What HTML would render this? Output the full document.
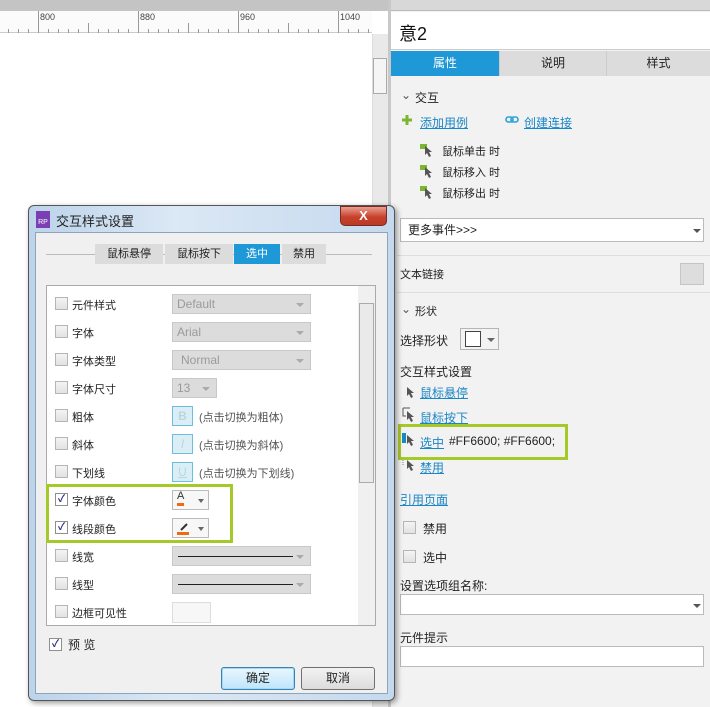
<!DOCTYPE html><html><head><meta charset="utf-8"><style>
*{margin:0;padding:0;box-sizing:border-box}
body{width:710px;height:707px;position:relative;overflow:hidden;background:#fff;font-family:"Liberation Sans","Noto Sans CJK SC",sans-serif;font-size:12px;color:#222}
.a{position:absolute;white-space:nowrap}
.lk{color:#1b86c6;text-decoration:underline}
.cb{position:absolute;width:13px;height:13px;border:1px solid #b5b5b5;background:linear-gradient(#f4f4f4,#e2e2e2)}
.ck{position:absolute;width:13px;height:13px;border:1px solid #8e8f8f;background:#fff;color:#2a2a8a;font-size:10px;line-height:11px;text-align:center;font-weight:bold}
.dd{position:absolute;height:20px;background:#dcdcdc;border:1px solid #c8c8c8;color:#9a9a9a;padding-left:4px;line-height:18px}
.dd:after{content:"";position:absolute;right:6px;top:8px;border:4px solid transparent;border-top:4px solid #aaa}
.lbl{position:absolute;left:72px}
</style></head><body>
<div class="a" style="left:0;top:0;width:390px;height:11px;background:#c4c4c4"></div>
<div class="a" style="left:0;top:11px;width:372px;height:22px;background:#fbfbfb;border-bottom:1px solid #ccc"></div>
<svg class="a" style="left:0;top:11px" width="372" height="22">
<g stroke="#999" stroke-width="1">
<path d="M38.5 0v22M88.5 12v10M138.5 0v22M188.5 12v10M238.5 0v22M288.5 12v10M338.5 0v22"/>
<path d="M8.5 18v4M18.5 18v4M28.5 18v4M48.5 18v4M58.5 18v4M68.5 18v4M78.5 18v4M98.5 18v4M108.5 18v4M118.5 18v4M128.5 18v4M148.5 18v4M158.5 18v4M168.5 18v4M178.5 18v4M198.5 18v4M208.5 18v4M218.5 18v4M228.5 18v4M248.5 18v4M258.5 18v4M268.5 18v4M278.5 18v4M298.5 18v4M308.5 18v4M318.5 18v4M328.5 18v4M348.5 18v4M358.5 18v4M368.5 18v4"/></g>
<g font-size="9" fill="#444" font-family="Liberation Sans"><text x="40" y="9">800</text><text x="140" y="9">880</text><text x="240" y="9">960</text><text x="340" y="9">1040</text></g></svg>
<div class="a" style="left:372px;top:34px;width:16px;height:673px;background:#e9e9e9;border-left:1px solid #ddd"></div>
<div class="a" style="left:373px;top:58px;width:14px;height:36px;background:#f5f5f5;border:1px solid #aaa"></div>
<div class="a" style="left:388px;top:0;width:3px;height:707px;background:#c8c8c8"></div>
<div class="a" style="left:391px;top:0;width:319px;height:707px;background:#f2f2f2"></div>
<div class="a" style="left:391px;top:0;width:319px;height:11px;background:#d8d8d8;border-bottom:1px solid #bbb"></div>
<div class="a" style="left:391px;top:12px;width:319px;height:38px;background:#fff;border-bottom:1px solid #ccc"></div>
<div class="a" style="left:399px;top:20px;font-size:18px;color:#111">意2</div>
<div class="a" style="left:391px;top:51px;width:108px;height:25px;background:#1e98d6;color:#fff;text-align:center;line-height:25px">属性</div>
<div class="a" style="left:499px;top:51px;width:107px;height:25px;background:#dcdcdc;text-align:center;line-height:25px;border-left:1px solid #ccc">说明</div>
<div class="a" style="left:606px;top:51px;width:104px;height:25px;background:#dcdcdc;text-align:center;line-height:25px;border-left:1px solid #ccc">样式</div>
<div class="a" style="left:401px;top:88px;color:#555">⌄</div>
<div class="a" style="left:415px;top:89px">交互</div>
<svg class="a" style="left:401px;top:114px" width="12" height="12"><path d="M6 1v10M1 6h10" stroke="#7cb631" stroke-width="3"/></svg>
<div class="a lk" style="left:420px;top:114px">添加用例</div>
<svg class="a" style="left:505px;top:116px" width="14" height="8"><rect x="1" y="1" width="7" height="5" rx="2.5" fill="none" stroke="#2aa0d8" stroke-width="1.6"/><rect x="6" y="1" width="7" height="5" rx="2.5" fill="none" stroke="#2aa0d8" stroke-width="1.6"/></svg>
<div class="a lk" style="left:524px;top:114px">创建连接</div>
<svg class="a" style="left:420px;top:144px" width="14" height="60"><g fill="#7cb631"><rect x="0" y="0" width="7" height="5"/><rect x="0" y="21" width="7" height="5"/><rect x="0" y="42" width="7" height="5"/></g><g fill="#555"><path d="M5 2l7 6-3 0 2 4-2 1-2-4-2 2z"/><path d="M5 23l7 6-3 0 2 4-2 1-2-4-2 2z"/><path d="M5 44l7 6-3 0 2 4-2 1-2-4-2 2z"/></g></svg>
<div class="a" style="left:442px;top:143px;font-size:11px">鼠标单击 时</div>
<div class="a" style="left:442px;top:164px;font-size:11px">鼠标移入 时</div>
<div class="a" style="left:442px;top:185px;font-size:11px">鼠标移出 时</div>
<div class="a" style="left:400px;top:218px;width:304px;height:24px;background:#fff;border:1px solid #bbb;padding-left:7px;line-height:22px">更多事件&gt;&gt;&gt;</div>
<div class="a" style="left:693px;top:229px;border:4px solid transparent;border-top:4px solid #555"></div>
<div class="a" style="left:397px;top:255px;width:313px;border-top:1px solid #ddd"></div>
<div class="a" style="left:400px;top:266px;font-size:11px">文本链接</div>
<div class="a" style="left:680px;top:263px;width:24px;height:22px;background:#ddd;border:1px solid #c5c5c5"></div>
<div class="a" style="left:397px;top:292px;width:313px;border-top:1px solid #ddd"></div>
<div class="a" style="left:401px;top:302px;color:#555">⌄</div>
<div class="a" style="left:415px;top:303px;font-size:11px">形状</div>
<div class="a" style="left:400px;top:332px">选择形状</div>
<div class="a" style="left:460px;top:328px;width:39px;height:22px;border:1px solid #b5b5b5;background:#f3f3f3"></div>
<div class="a" style="left:465px;top:331px;width:16px;height:16px;border:1px solid #444;background:#fff"></div>
<div class="a" style="left:487px;top:338px;border:4px solid transparent;border-top:4px solid #666"></div>
<div class="a" style="left:400px;top:363px">交互样式设置</div>
<svg class="a" style="left:402px;top:385px" width="14" height="90"><path d="M5 2l7 6-3 0 2 4-2 1-2-4-2 2z" fill="#555"/><path d="M1 23v8h3M1 23h7" stroke="#555" fill="none"/><path d="M5 26l7 6-3 0 2 4-2 1-2-4-2 2z" fill="#555"/><rect x="0" y="48" width="4" height="10" fill="#1b86c6"/><path d="M5 50l7 6-3 0 2 4-2 1-2-4-2 2z" fill="#555"/><path d="M1 73v8M1 73h6" stroke="#888" stroke-dasharray="1 1" fill="none"/><path d="M5 75l7 6-3 0 2 4-2 1-2-4-2 2z" fill="#555"/></svg>
<div class="a lk" style="left:420px;top:384px">鼠标悬停</div>
<div class="a lk" style="left:420px;top:409px">鼠标按下</div>
<div class="a lk" style="left:420px;top:434px">选中</div>
<div class="a" style="left:449px;top:434px">#FF6600; #FF6600;</div>
<div class="a" style="left:398px;top:424px;width:170px;height:36px;border:3px solid #a6c92a"></div>
<div class="a lk" style="left:420px;top:459px">禁用</div>
<div class="a lk" style="left:400px;top:491px">引用页面</div>
<div class="cb" style="left:403px;top:521px"></div><div class="a" style="left:423px;top:520px">禁用</div>
<div class="cb" style="left:403px;top:550px"></div><div class="a" style="left:423px;top:549px">选中</div>
<div class="a" style="left:400px;top:577px">设置选项组名称:</div>
<div class="a" style="left:400px;top:594px;width:304px;height:21px;background:#fff;border:1px solid #bbb"></div>
<div class="a" style="left:693px;top:604px;border:4px solid transparent;border-top:4px solid #555"></div>
<div class="a" style="left:400px;top:629px">元件提示</div>
<div class="a" style="left:400px;top:646px;width:304px;height:21px;background:#fff;border:1px solid #bbb"></div>
<div class="a" style="left:28px;top:205px;width:367px;height:496px;border:1px solid #555;border-radius:6px;background:linear-gradient(90deg,#bcd3ea,#dbe8f5 40%,#c5d9ee);box-shadow:2px 2px 6px rgba(0,0,0,.4)"></div>
<div class="a" style="left:36px;top:211px;width:14px;height:17px;background:#7b3fb5;color:#fff;font-size:7px;line-height:24px;text-align:center">RP</div>
<div class="a" style="left:56px;top:211px;font-size:13px">交互样式设置</div>
<div class="a" style="left:340px;top:206px;width:47px;height:20px;border:1px solid #7a2a20;border-radius:0 0 5px 5px;background:linear-gradient(#e8a090,#c8412c 55%,#b93a25);color:#fff;text-align:center;font-weight:bold;font-size:13px;line-height:18px">X</div>
<div class="a" style="left:35px;top:232px;width:353px;height:462px;background:#f0f0f0;border:1px solid #8ea4bb"></div>
<div class="a" style="left:46px;top:254px;width:326px;border-top:1px solid #bbb"></div>
<div class="a" style="left:95px;top:244px;width:68px;height:20px;background:#dcdcdc;text-align:center;line-height:20px;font-size:11px">鼠标悬停</div>
<div class="a" style="left:165px;top:244px;width:68px;height:20px;background:#dcdcdc;text-align:center;line-height:20px;font-size:11px">鼠标按下</div>
<div class="a" style="left:234px;top:244px;width:46px;height:20px;background:#1e98d6;color:#fff;text-align:center;line-height:20px;font-size:11px">选中</div>
<div class="a" style="left:282px;top:244px;width:44px;height:20px;background:#dcdcdc;text-align:center;line-height:20px;font-size:11px">禁用</div>
<div class="a" style="left:46px;top:285px;width:330px;height:341px;background:#fff;border:1px solid #aaa"></div>
<div class="a" style="left:358px;top:286px;width:17px;height:339px;background:#f0f0f0"></div>
<div class="a" style="left:359px;top:303px;width:15px;height:180px;background:#eaeaea;border:1px solid #aaa"></div>
<div class="cb" style="left:55px;top:297px"></div><div class="a lbl" style="top:297px;font-size:11px">元件样式</div><div class="dd" style="left:172px;top:294px;width:139px">Default</div>
<div class="cb" style="left:55px;top:325px"></div><div class="a lbl" style="top:325px;font-size:11px">字体</div><div class="dd" style="left:172px;top:322px;width:139px">Arial</div>
<div class="cb" style="left:55px;top:353px"></div><div class="a lbl" style="top:353px;font-size:11px">字体类型</div><div class="dd" style="left:172px;top:350px;width:139px;padding-left:8px">Normal</div>
<div class="cb" style="left:55px;top:381px"></div><div class="a lbl" style="top:381px;font-size:11px">字体尺寸</div><div class="dd" style="left:172px;top:378px;width:45px">13</div>
<div class="cb" style="left:55px;top:409px"></div><div class="a lbl" style="top:409px;font-size:11px">粗体</div>
<div class="cb" style="left:55px;top:437px"></div><div class="a lbl" style="top:437px;font-size:11px">斜体</div>
<div class="cb" style="left:55px;top:465px"></div><div class="a lbl" style="top:465px;font-size:11px">下划线</div>
<div class="a" style="left:172px;top:406px;width:21px;height:20px;background:#dbeef6;border:1px solid #6cbfdd;color:#b6d6e6;text-align:center;font-weight:bold;line-height:18px">B</div><div class="a" style="left:199px;top:409px;font-size:11px;color:#555">(点击切换为粗体)</div>
<div class="a" style="left:172px;top:434px;width:21px;height:20px;background:#dbeef6;border:1px solid #6cbfdd;color:#b6d6e6;text-align:center;font-style:italic;line-height:18px">I</div><div class="a" style="left:199px;top:437px;font-size:11px;color:#555">(点击切换为斜体)</div>
<div class="a" style="left:172px;top:462px;width:21px;height:20px;background:#dbeef6;border:1px solid #6cbfdd;color:#b6d6e6;text-align:center;text-decoration:underline;line-height:18px">U</div><div class="a" style="left:199px;top:465px;font-size:11px;color:#555">(点击切换为下划线)</div>
<div class="ck" style="left:55px;top:493px">✓</div><div class="a lbl" style="top:493px;font-size:11px">字体颜色</div>
<div class="a" style="left:172px;top:490px;width:37px;height:20px;border:1px solid #bbb;background:#f7f7f7"></div>
<div class="a" style="left:177px;top:490px;font-size:11px;color:#333;border-bottom:3px solid #f06a10;line-height:13px">A</div>
<div class="a" style="left:198px;top:499px;border:3px solid transparent;border-top:4px solid #666"></div>
<div class="ck" style="left:55px;top:521px">✓</div><div class="a lbl" style="top:521px;font-size:11px">线段颜色</div>
<div class="a" style="left:172px;top:518px;width:37px;height:20px;border:1px solid #bbb;background:#f7f7f7"></div>
<svg class="a" style="left:176px;top:520px" width="16" height="16"><path d="M5 10l6-6" stroke="#333" stroke-width="2"/><rect x="1" y="12" width="12" height="3" fill="#f06a10"/></svg>
<div class="a" style="left:198px;top:527px;border:3px solid transparent;border-top:4px solid #666"></div>
<div class="a" style="left:46px;top:484px;width:187px;height:59px;border:3px solid #a6c92a"></div>
<div class="cb" style="left:55px;top:549px"></div><div class="a lbl" style="top:549px;font-size:11px">线宽</div><div class="dd" style="left:172px;top:546px;width:139px"></div>
<div class="a" style="left:178px;top:556px;width:115px;border-top:1px solid #222"></div>
<div class="cb" style="left:55px;top:577px"></div><div class="a lbl" style="top:577px;font-size:11px">线型</div><div class="dd" style="left:172px;top:574px;width:139px"></div>
<div class="a" style="left:178px;top:584px;width:115px;border-top:1px solid #222"></div>
<div class="cb" style="left:55px;top:605px"></div><div class="a lbl" style="top:605px;font-size:11px">边框可见性</div>
<div class="a" style="left:172px;top:602px;width:39px;height:21px;border:1px solid #ddd;background:#f7f7f7"></div>
<div class="ck" style="left:49px;top:638px">✓</div><div class="a" style="left:68px;top:636px">预 览</div>
<div class="a" style="left:221px;top:667px;width:74px;height:23px;border:1px solid #3c7fb1;border-radius:3px;background:linear-gradient(#eaf6fd,#bee6fd);box-shadow:inset 0 0 0 1px #9fdcfc;text-align:center;line-height:21px">确定</div>
<div class="a" style="left:301px;top:667px;width:74px;height:23px;border:1px solid #707070;border-radius:3px;background:linear-gradient(#f2f2f2,#dcdcdc);text-align:center;line-height:21px">取消</div>
</body></html>
